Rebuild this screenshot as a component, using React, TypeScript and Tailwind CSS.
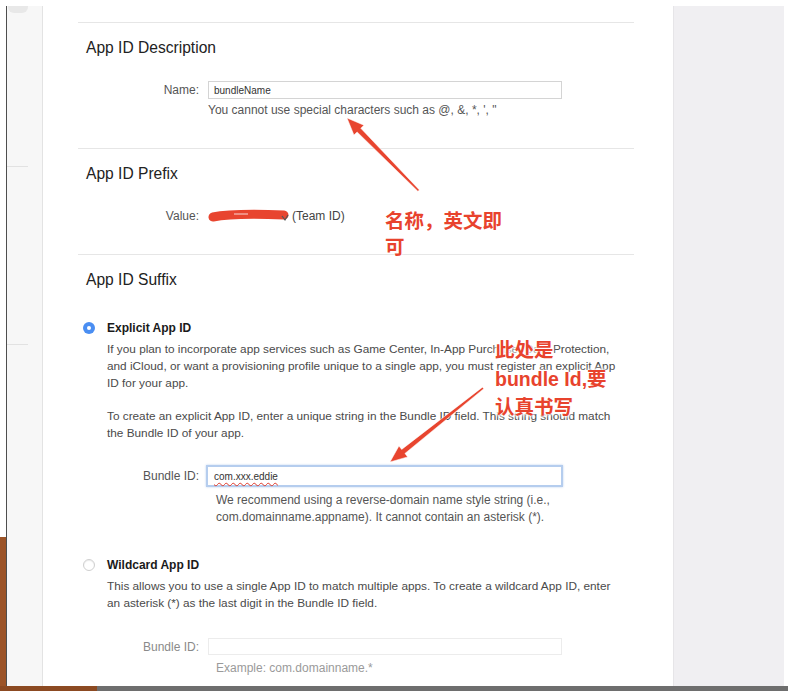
import React from "react";

function Radio({ checked }: { checked: boolean }) {
  if (checked) {
    return (
      <div className="mt-[2px] ml-[-3px] mr-[12px] flex h-[12px] w-[12px] shrink-0 items-center justify-center rounded-full bg-[#4a8ef2]">
        <div className="h-[4px] w-[4px] rounded-full bg-white" />
      </div>
    );
  }
  return (
    <div className="mt-[2px] ml-[-3px] mr-[12px] h-[12px] w-[12px] shrink-0 rounded-full border border-[#cfcfcf] bg-white shadow-[inset_0_1px_1px_rgba(0,0,0,0.08)]" />
  );
}

function Arrow({ tx, ty, angle, len }: { tx: number; ty: number; angle: number; len: number }) {
  return (
    <g transform={`translate(${tx} ${ty}) rotate(${angle})`}>
      <polygon
        points={`${-len},-1 -17,-2.6 -17,-7 0,0 -17,7 -17,2.6 ${-len},1`}
        fill="#e8452f"
        stroke="#ffffff"
        strokeOpacity="0.6"
        strokeWidth="0.8"
      />
    </g>
  );
}

export default function App() {
  return (
    <div className="relative flex h-[691px] w-[788px] flex-col overflow-hidden bg-white font-['Liberation_Sans',Arial,sans-serif]">
      <div className="h-[6px] shrink-0" />

      <div className="flex flex-1">
        {/* window edge */}
        <div className="flex w-[6px] flex-col">
          <div className="flex-1 bg-white" />
          <div className="h-[149px] bg-[#9c5428]" />
        </div>
        <div className="w-px bg-[#4e4e4e]" />

        {/* sidebar */}
        <div className="w-[36px] border-r border-[#e3e3e3] bg-[#f7f7f7]">
          <div className="ml-px h-[7px] w-[20px] rounded-b-[6px] bg-[#e8e8e8]" />
          <div className="mt-[153px] h-px w-[21px] bg-[#e2e2e2]" />
          <div className="mt-[177px] h-px w-[21px] bg-[#e2e2e2]" />
        </div>

        {/* main form */}
        <div className="w-[630px] bg-white pt-[16px]">
          <div className="ml-[35px] w-[556px]">
            {/* App ID Description */}
            <div className="border-t border-[#e6e6e6] pl-[8px] pt-[16px] pb-[31px]">
              <div className="h-[18px] text-[15.6px] leading-[18px] text-[#222]">App ID Description</div>
              <div className="mt-[24px] flex h-[18px] items-center">
                <div className="mr-[9px] w-[113px] text-right text-[12px] text-[#555]">Name:</div>
                <div className="flex h-[18px] w-[354px] items-center border border-[#d4d4d4] pl-[5px] text-[10px] text-[#333]">
                  bundleName
                </div>
              </div>
              <div className="ml-[122px] mt-[4px] text-[12px] leading-[14px] text-[#555]">
                You cannot use special characters such as @, &amp;, *, ', "
              </div>
            </div>

            {/* App ID Prefix */}
            <div className="border-t border-[#e6e6e6] pl-[8px] pt-[16px] pb-[30px]">
              <div className="h-[18px] text-[15.6px] leading-[18px] text-[#222]">App ID Prefix</div>
              <div className="mt-[24px] flex h-[17px] items-center">
                <div className="mr-[9px] w-[113px] text-right text-[12px] text-[#555]">Value:</div>
                <svg width="82" height="16" viewBox="0 0 82 16">
                  <path d="M5 9 C 20 6, 50 6, 76 7" stroke="#e8452f" strokeWidth="9" strokeLinecap="round" fill="none" />
                  <path d="M26 6 L40 6" stroke="#ffffff" strokeWidth="1" opacity="0.8" />
                  <path d="M74 8 L77 12 L80 7" stroke="#555" strokeWidth="1.2" fill="none" />
                </svg>
                <div className="ml-[2px] text-[12px] text-[#444]">(Team ID)</div>
              </div>
            </div>

            {/* App ID Suffix */}
            <div className="border-t border-[#e6e6e6] pl-[8px] pt-[16px]">
              <div className="h-[18px] text-[15.6px] leading-[18px] text-[#222]">App ID Suffix</div>

              <div className="mt-[31px] flex">
                <Radio checked />
                <div className="text-[12px] text-[#4a4a4a]">
                  <div className="h-[17px] font-bold leading-[17px] text-[#1a1a1a]">Explicit App ID</div>
                  <div className="mt-[4px] whitespace-nowrap text-[11.8px] leading-[17px]">
                    If you plan to incorporate app services such as Game Center, In-App Purchase, Data Protection,
                    <br />
                    and iCloud, or want a provisioning profile unique to a single app, you must register an explicit App
                    <br />
                    ID for your app.
                  </div>
                  <div className="mt-[16px] whitespace-nowrap text-[11.8px] leading-[17px]">
                    To create an explicit App ID, enter a unique string in the Bundle ID field. This string should match
                    <br />
                    the Bundle ID of your app.
                  </div>
                  <div className="mt-[23px] flex h-[22px] items-center">
                    <div className="mr-[7px] w-[92px] text-right text-[#555]">Bundle ID:</div>
                    <div className="flex h-[22px] w-[357px] items-center border-2 border-[#b5cdee] pl-[6px] text-[10px] text-[#333] shadow-[0_0_2px_rgba(90,140,220,0.4)]">
                      <span className="underline decoration-[#e03a2a] decoration-wavy decoration-1 underline-offset-2">com.xxx.eddie</span>
                    </div>
                  </div>
                  <div className="ml-[109px] mt-[5px] whitespace-nowrap leading-[17px] text-[#555]">
                    We recommend using a reverse-domain name style string (i.e.,
                    <br />
                    com.domainname.appname). It cannot contain an asterisk (*).
                  </div>
                </div>
              </div>

              <div className="mt-[31px] flex">
                <Radio checked={false} />
                <div className="text-[12px] text-[#4a4a4a]">
                  <div className="h-[17px] font-bold leading-[17px] text-[#1a1a1a]">Wildcard App ID</div>
                  <div className="mt-[4px] whitespace-nowrap text-[11.8px] leading-[17px]">
                    This allows you to use a single App ID to match multiple apps. To create a wildcard App ID, enter
                    <br />
                    an asterisk (*) as the last digit in the Bundle ID field.
                  </div>
                  <div className="mt-[26px] flex h-[17px] items-center">
                    <div className="mr-[9px] w-[92px] text-right text-[#8a8a8a]">Bundle ID:</div>
                    <div className="h-[17px] w-[354px] border border-[#ececec]" />
                  </div>
                  <div className="ml-[109px] mt-[6px] leading-[14px] text-[#9a9a9a]">Example: com.domainname.*</div>
                </div>
              </div>
            </div>
          </div>
        </div>

        {/* right panel */}
        <div className="w-[111px] border-l border-[#e6e5e8] bg-[#f0eff2]" />
        <div className="w-[4px] bg-white" />
      </div>

      {/* bottom edge */}
      <div className="flex h-[5px] shrink-0">
        <div className="w-[97px] bg-[#8c4a22]" />
        <div className="flex-1 bg-[#6e6e6e]" />
      </div>

      {/* annotations */}
      <svg className="pointer-events-none absolute left-0 top-0" width="788" height="691">
        <Arrow tx={347} ty={118} angle={225.4} len={102} />
        <Arrow tx={390} ty={462} angle={141.5} len={119} />
      </svg>
      <div className="pointer-events-none absolute left-[385px] top-[207px] font-['Noto_Sans_CJK_SC',sans-serif] text-[19.5px] font-bold leading-[26px] text-[#e8432d] [text-shadow:0_0_2px_#fff,0_0_3px_#fff,0_0_3px_#fff]">
        名称，英文即
        <br />
        可
      </div>
      <div className="pointer-events-none absolute left-[495px] top-[336px] font-['Liberation_Sans','Noto_Sans_CJK_SC',sans-serif] text-[19.5px] font-bold leading-[28.5px] text-[#e8432d] [text-shadow:0_0_2px_#fff,0_0_3px_#fff,0_0_4px_#fff,0_0_5px_#fff]">
        此处是
        <br />
        bundle Id,要
        <br />
        认真书写
      </div>
    </div>
  );
}
